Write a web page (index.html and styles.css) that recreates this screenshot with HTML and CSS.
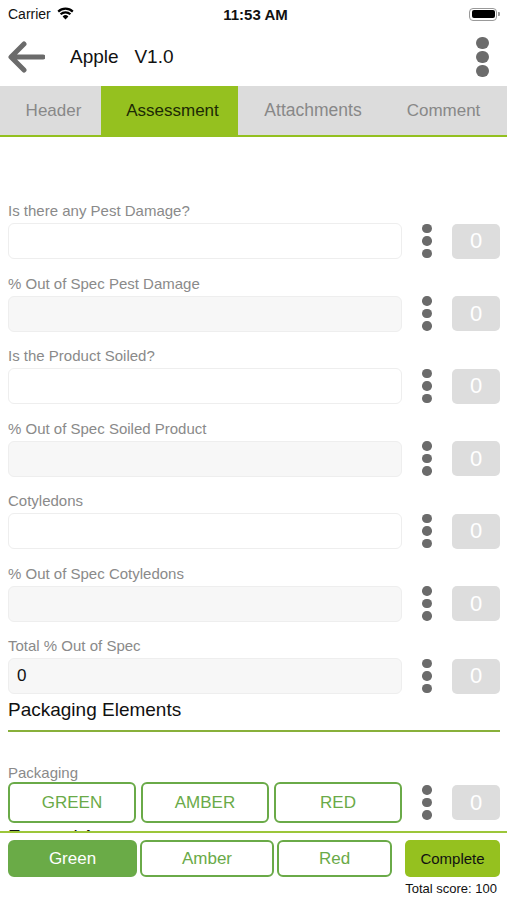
FILE: index.html
```html
<!DOCTYPE html>
<html>
<head>
<meta charset="utf-8">
<link rel="stylesheet" href="styles.css">
</head>
<body>
<div class="status">
  <div class="carrier">Carrier
    <svg class="wifi" width="17" height="13" viewBox="0 0 17 13"><path d="M8.5 12.5 L5.6 9.4 A4.2 4.2 0 0 1 11.4 9.4 Z" fill="#000"/><path d="M3.6 7.3 A7 7 0 0 1 13.4 7.3" stroke="#000" stroke-width="2.2" fill="none"/><path d="M1.2 4.6 A10.6 10.6 0 0 1 15.8 4.6" stroke="#000" stroke-width="2.2" fill="none"/></svg>
  </div>
  <div class="time">11:53 AM</div>
  <div class="battery"><span class="batt-body"><span class="batt-fill"></span></span><span class="batt-tip"></span></div>
</div>

<div class="nav">
  <svg class="back" width="38" height="32" viewBox="0 0 38 32"><path d="M36 16 H6 M17 3 L4 16 L17 29" stroke="#6b6b6b" stroke-width="5" fill="none" stroke-linecap="round" stroke-linejoin="round"/></svg>
  <div class="title">Apple&nbsp;&nbsp;&nbsp;V1.0</div>
  <div class="kebab"><span></span><span></span><span></span></div>
</div>

<div class="tabs">
  <div class="tab t1">Header</div>
  <div class="tab t2 active">Assessment</div>
  <div class="tab t3">Attachments</div>
  <div class="tab t4">Comment</div>
</div>

<div class="content">
  <div class="spacer"></div>

  <div class="field">
    <div class="label">Is there any Pest Damage?</div>
    <div class="row"><div class="input"></div><div class="dots"><span></span><span></span><span></span></div><div class="score">0</div></div>
  </div>
  <div class="field">
    <div class="label">% Out of Spec Pest Damage</div>
    <div class="row"><div class="input grey"></div><div class="dots"><span></span><span></span><span></span></div><div class="score">0</div></div>
  </div>
  <div class="field">
    <div class="label">Is the Product Soiled?</div>
    <div class="row"><div class="input"></div><div class="dots"><span></span><span></span><span></span></div><div class="score">0</div></div>
  </div>
  <div class="field">
    <div class="label">% Out of Spec Soiled Product</div>
    <div class="row"><div class="input grey"></div><div class="dots"><span></span><span></span><span></span></div><div class="score">0</div></div>
  </div>
  <div class="field">
    <div class="label">Cotyledons</div>
    <div class="row"><div class="input"></div><div class="dots"><span></span><span></span><span></span></div><div class="score">0</div></div>
  </div>
  <div class="field">
    <div class="label">% Out of Spec Cotyledons</div>
    <div class="row"><div class="input grey"></div><div class="dots"><span></span><span></span><span></span></div><div class="score">0</div></div>
  </div>
  <div class="field last">
    <div class="label">Total % Out of Spec</div>
    <div class="row"><div class="input grey">0</div><div class="dots"><span></span><span></span><span></span></div><div class="score">0</div></div>
  </div>

  <div class="section">Packaging Elements</div>

  <div class="field pack">
    <div class="label">Packaging</div>
    <div class="row">
      <div class="choices">
        <div class="choice">GREEN</div>
        <div class="choice">AMBER</div>
        <div class="choice">RED</div>
      </div>
      <div class="dots"><span></span><span></span><span></span></div><div class="score">0</div>
    </div>
  </div>

  <div class="section next">External Appearance</div>
</div>

<div class="bottom">
  <div class="brow">
    <div class="bbtn filled">Green</div>
    <div class="bbtn amber">Amber</div>
    <div class="bbtn red">Red</div>
    <div class="complete">Complete</div>
  </div>
  <div class="total">Total score: 100</div>
</div>
</body>
</html>
```

FILE: styles.css
```css
* { box-sizing: border-box; }
html, body { margin: 0; padding: 0; }
body {
  width: 507px;
  height: 900px;
  overflow: hidden;
  background: #fff;
  font-family: "Liberation Sans", Arial, sans-serif;
  color: #111;
  position: relative;
}

.status {
  height: 28px;
  display: flex;
  align-items: center;
  justify-content: space-between;
  padding: 0 7px 0 8px;
  position: relative;
}
.carrier { font-size: 14px; display: flex; align-items: center; gap: 6px; }
.wifi { margin-top: -1px; }
.time {
  position: absolute;
  left: 0; right: 0;
  text-align: center;
  font-weight: bold;
  font-size: 15px;
  padding-left: 4px;
}
.battery { display: flex; align-items: center; }
.batt-body {
  width: 28px; height: 13px;
  border: 1px solid #999;
  border-radius: 4px;
  padding: 1.5px;
  display: block;
}
.batt-fill { display: block; width: 100%; height: 100%; background: #000; border-radius: 2px; }
.batt-tip { width: 2px; height: 4px; background: #999; border-radius: 0 1px 1px 0; margin-left: 1px; }

.nav {
  height: 58px;
  display: flex;
  align-items: center;
  padding: 0 0 0 7px;
}
.back { margin-right: 25px; }
.title { font-size: 19px; flex: 1; color: #111; }
.kebab {
  width: 48px;
  display: flex;
  flex-direction: column;
  align-items: center;
  gap: 1.5px;
  padding-right: 1px;
}
.kebab span { width: 12.5px; height: 12.5px; border-radius: 50%; background: #6b6b6b; }

.tabs {
  display: flex;
  height: 51px;
  background: #dcdcdc;
  border-bottom: 2px solid #93c01f;
}
.tab {
  font-size: 17px;
  color: #888;
  display: flex;
  align-items: center;
  justify-content: center;
  padding-left: 6px;
}
.t1 { width: 101px; }
.t2 { width: 137px; }
.t3 { width: 150px; padding-left: 0; font-size: 17.5px; }
.t4 { flex: 1; padding-left: 0; padding-right: 8px; }
.tab.active { background: #95c11f; color: #1c2a05; }

.content { padding: 0 7px 0 8px; }
.spacer { height: 65px; }

.field { margin-bottom: 15.5px; }
.label { font-size: 15px; line-height: 17px; color: #8a8a8a; margin-bottom: 4px; }
.row { display: flex; align-items: center; }
.input {
  flex: 1;
  height: 36px;
  border: 1px solid #eeeeee;
  border-radius: 6px;
  background: #fff;
  font-size: 17px;
  color: #111;
  display: flex;
  align-items: center;
  padding-left: 8px;
}
.input.grey { background: #f7f7f7; }
.dots {
  width: 50px;
  display: flex;
  flex-direction: column;
  align-items: center;
  gap: 3px;
}
.dots span { width: 9.5px; height: 9.5px; border-radius: 50%; background: #6b6b6b; }
.score {
  width: 48px;
  height: 35px;
  background: #dddddd;
  border-radius: 5px;
  color: #fff;
  font-size: 22px;
  display: flex;
  align-items: center;
  justify-content: center;
}

.field.last { margin-bottom: 4px; }
.section {
  font-size: 19px;
  line-height: 24px;
  color: #111;
  padding-bottom: 8px;
  border-bottom: 2px solid #88b03a;
  margin-bottom: 32px;
}
.section.next { border-bottom: none; margin-bottom: 0; margin-top: 1px; }

.field.pack { margin-bottom: 2px; }
.pack .label { margin-bottom: 1px; }
.choices { flex: 1; display: flex; gap: 5px; }
.choice {
  flex: 1;
  height: 41px;
  border: 2px solid #6aaa48;
  border-radius: 6px;
  color: #6aaa48;
  font-size: 17px;
  display: flex;
  align-items: center;
  justify-content: center;
}

.bottom {
  position: absolute;
  left: 0; right: 0; bottom: 0;
  height: 69px;
  background: #fff;
  border-top: 2px solid #9cc63a;
  padding: 7px 7px 0 8px;
}
.brow { display: flex; align-items: center; height: 37px; }
.bbtn {
  height: 37px;
  border: 2px solid #6aaa48;
  border-radius: 6px;
  color: #6aaa48;
  font-size: 17px;
  display: flex;
  align-items: center;
  justify-content: center;
  margin-right: 3px;
}
.bbtn.filled { width: 129px; background: #6aab47; color: #fff; }
.bbtn.amber { width: 134px; }
.bbtn.red { width: 115px; margin-right: 13px; }
.complete {
  flex: 1;
  height: 37px;
  background: #95c11f;
  border-radius: 5px;
  font-size: 15px;
  color: #111;
  display: flex;
  align-items: center;
  justify-content: center;
}
.total {
  text-align: right;
  font-size: 13px;
  color: #111;
  margin-top: 4px;
  padding-right: 3px;
}
```
